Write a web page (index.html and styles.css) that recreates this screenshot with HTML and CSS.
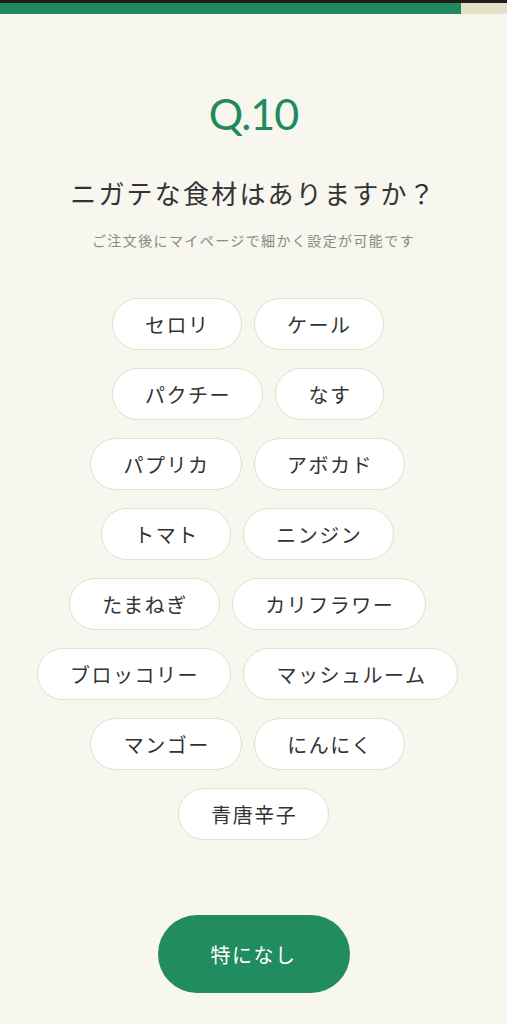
FILE: index.html
```html
<!DOCTYPE html>
<html lang="ja">
<head>
    <meta charset="UTF-8">
    <title>Q.10 ニガテな食材</title>
    <link rel="stylesheet" href="styles.css">
</head>
<body>
<div class="progress">
    <div class="progress-bar" style="width: 91%"></div>
</div>
<div class="question">
    <p class="q-num">Q.10</p>
    <h1 class="q-title">ニガテな食材はありますか？</h1>
    <p class="q-note">ご注文後にマイページで細かく設定が可能です</p>
    <ul class="chips">
        <li class="chip">セロリ</li>
        <li class="chip">ケール</li>
        <li class="chip">パクチー</li>
        <li class="chip">なす</li>
        <li class="chip">パプリカ</li>
        <li class="chip">アボカド</li>
        <li class="chip">トマト</li>
        <li class="chip">ニンジン</li>
        <li class="chip">たまねぎ</li>
        <li class="chip">カリフラワー</li>
        <li class="chip">ブロッコリー</li>
        <li class="chip">マッシュルーム</li>
        <li class="chip">マンゴー</li>
        <li class="chip">にんにく</li>
        <li class="chip">青唐辛子</li>
    </ul>
    <div class="actions">
        <button class="btn-none">特になし</button>
    </div>
</div>
</body>
</html>
```

FILE: styles.css
```css
* {
    margin: 0;
    padding: 0;
    box-sizing: border-box;
}

body {
    background: #f7f6ef;
    font-family: "Noto Sans CJK JP", "Noto Sans", sans-serif;
    color: #333;
}

/* 進捗バー */
.progress {
    height: 14px;
    border-top: 3px solid #1b1d1c;
    background: #e4dfc7;
}

.progress-bar {
    height: 100%;
    background: #1f8a5e;
}

.question {
    text-align: center;
}

.q-num {
    margin-top: 78px;
    font-family: "Lato", sans-serif;
    font-size: 43px;
    font-weight: 400;
    line-height: 43px;
    color: #1f8a5e;
    letter-spacing: -1px;
}

.q-title {
    margin-top: 40px;
    font-size: 26px;
    font-weight: 400;
    line-height: 36px;
    letter-spacing: 2.2px;
}

.q-note {
    margin-top: 19px;
    font-size: 14px;
    line-height: 20px;
    color: #8a8980;
    letter-spacing: 1.4px;
}

.chips {
    list-style: none;
    display: flex;
    flex-wrap: wrap;
    justify-content: center;
    max-width: 440px;
    margin: 48px auto 0;
}

.chip {
    height: 52px;
    margin: 0 12px 18px 0;
    padding: 0 31px 0 32.5px;
    display: flex;
    align-items: center;
    background: #fff;
    border: 1px solid #e4e0c9;
    border-radius: 26px;
    font-size: 20px;
    letter-spacing: 1.5px;
    color: #333;
}

.chip:last-child {
    margin-right: 0;
}

.actions {
    margin-top: 57px;
}

.btn-none {
    width: 192px;
    height: 78px;
    border: none;
    border-radius: 39px;
    background: #218c60;
    color: #fff;
    font-family: "Noto Sans CJK JP", "Noto Sans", sans-serif;
    font-size: 20px;
    letter-spacing: 1.5px;
}
```
